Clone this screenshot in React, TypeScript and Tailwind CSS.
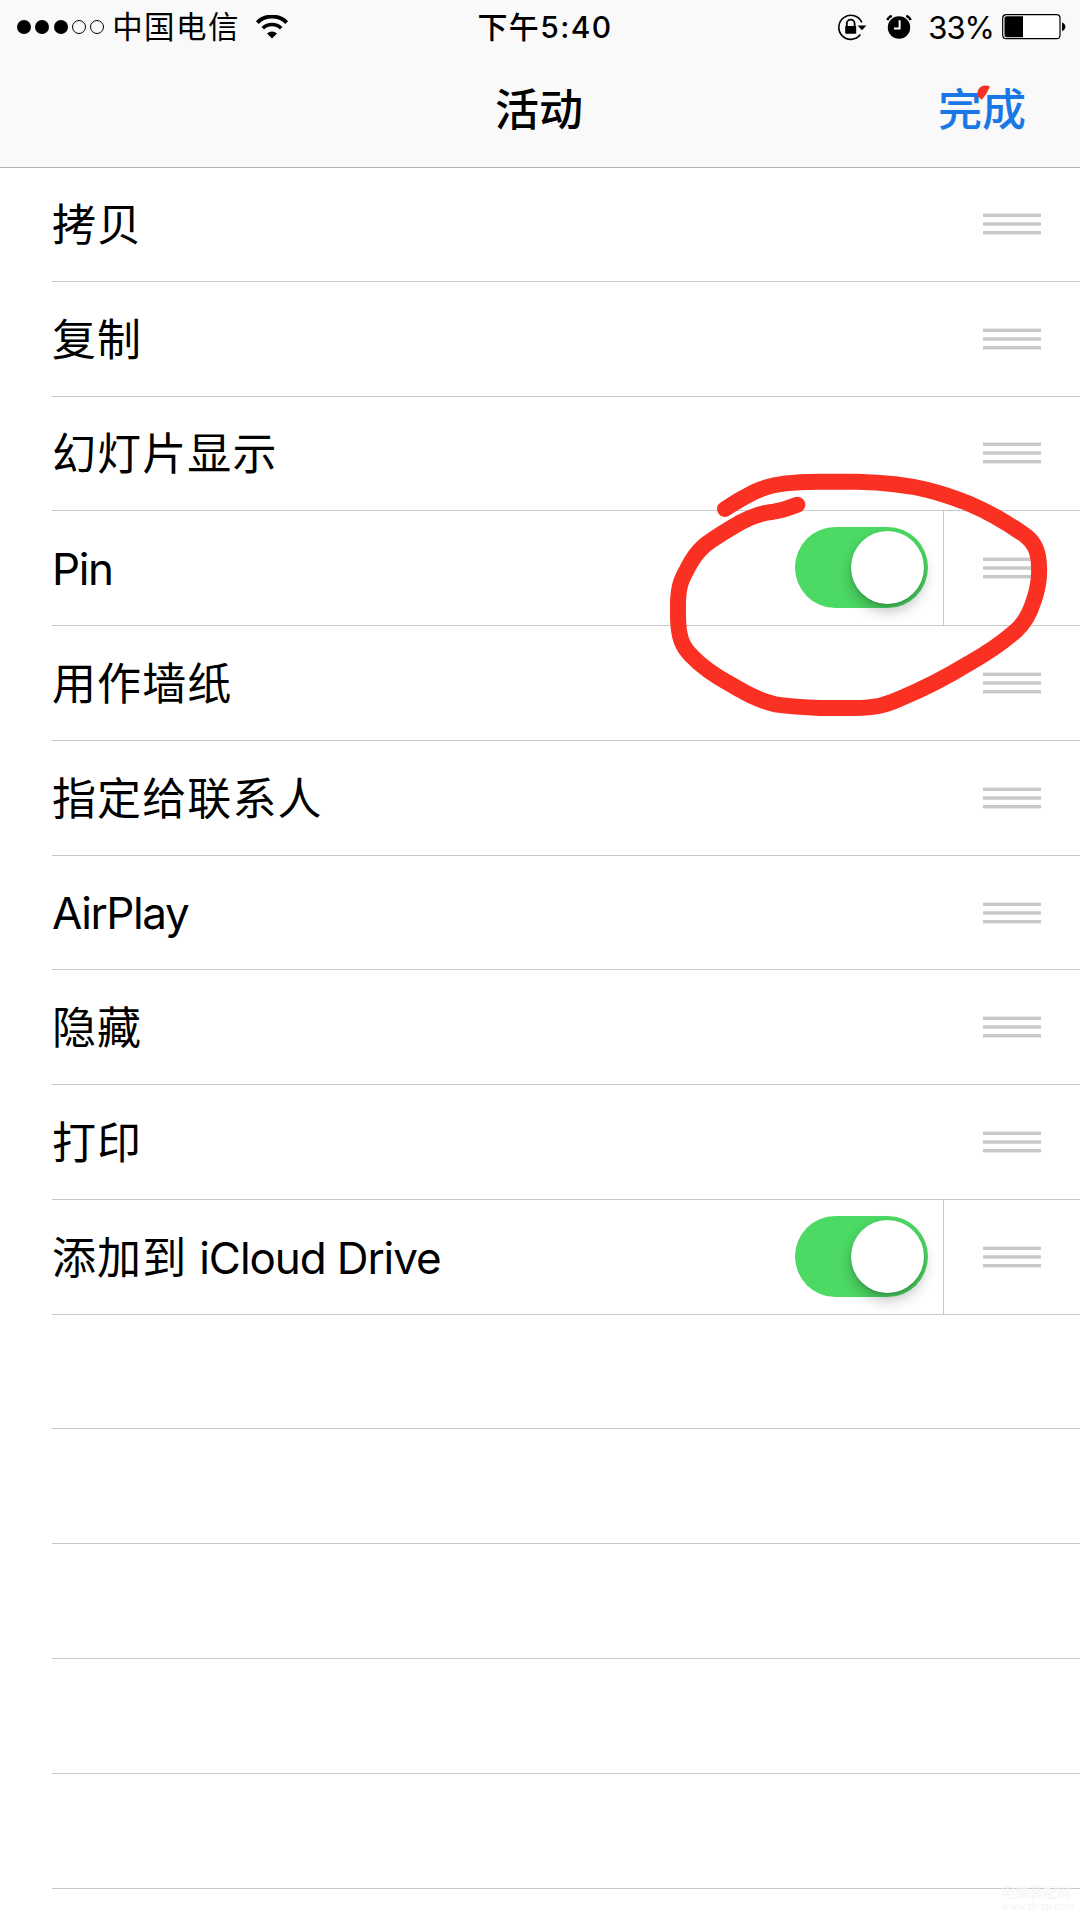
import React, { useState } from 'react';

interface Activity {
  id: string;
  title?: string;
  latin?: string;
  enabled?: boolean;
}

const ACTIVITIES: Activity[] = [
  { id: 'copy', title: '拷贝' },
  { id: 'duplicate', title: '复制' },
  { id: 'slideshow', title: '幻灯片显示' },
  { id: 'pin', latin: 'Pin', enabled: true },
  { id: 'wallpaper', title: '用作墙纸' },
  { id: 'contact', title: '指定给联系人' },
  { id: 'airplay', latin: 'AirPlay' },
  { id: 'hide', title: '隐藏' },
  { id: 'print', title: '打印' },
  { id: 'icloud', title: '添加到', latin: 'iCloud Drive', enabled: true },
];

const EMPTY_ROWS = [1, 2, 3, 4, 5];

function WifiIcon() {
  return (
    <svg viewBox="0 0 32 24" className="w-8 h-6" fill="none" stroke="black">
      <path d="M1.3 7.6a21 21 0 0 1 29.4 0" strokeWidth="4" />
      <path d="M6.8 13.2a13.4 13.4 0 0 1 18.4 0" strokeWidth="3.6" />
      <path d="M16 23.6l-5-5.1a7.2 7.2 0 0 1 10 0z" fill="black" stroke="none" />
    </svg>
  );
}

function RotationLockIcon() {
  return (
    <svg viewBox="0 0 30 28" className="w-[30px] h-7" fill="none" stroke="black">
      <path d="M24.8 9.5A12 12 0 1 0 23.4 21.6" strokeWidth="1.6" />
      <path d="M20.6 12.4h8.8L25 17.2z" fill="black" stroke="none" />
      <path d="M9.8 14v-3.4a3.9 3.9 0 0 1 7.8 0V14" strokeWidth="1.8" />
      <rect x="8.2" y="13" width="11" height="7.8" rx="0.8" fill="black" stroke="none" />
    </svg>
  );
}

function AlarmIcon() {
  return (
    <svg viewBox="0 0 26 26" className="w-[26px] h-[26px]" fill="none">
      <circle cx="13" cy="13.5" r="11.2" fill="black" />
      <path
        d="M1.4 6.2Q2.5 3 5.8 1.9M24.6 6.2Q23.5 3 20.2 1.9"
        stroke="black"
        strokeWidth="2.4"
      />
      <path d="M13.6 6.2v8.2H8" stroke="white" strokeWidth="2" />
    </svg>
  );
}

function BatteryIcon() {
  return (
    <svg viewBox="0 0 64 26" className="w-16 h-[26px]">
      <rect x="0.7" y="0.7" width="57.3" height="24" rx="3.5" fill="white" stroke="black" strokeWidth="1.2" />
      <path d="M4.5 2.2H21V23.2H4.500a2 2 0 0 1-2-2V4.2a2 2 0 0 1 2-2z" fill="black" />
      <path d="M60 8.5q3.4 1.5 3.4 4.3t-3.4 4.3z" fill="black" />
    </svg>
  );
}

function StatusBar() {
  return (
    <div className="grid grid-cols-[440px_1fr_430px] h-[54px] items-center">
      <div className="flex items-center pl-[17px]">
        <div className="flex space-x-[4.3px]">
          <span className="w-3.5 h-3.5 rounded-full bg-black" />
          <span className="w-3.5 h-3.5 rounded-full bg-black" />
          <span className="w-3.5 h-3.5 rounded-full bg-black" />
          <span className="w-3.5 h-3.5 rounded-full border border-black" />
          <span className="w-3.5 h-3.5 rounded-full border border-black" />
        </div>
        <span className="ml-[8px] mr-4 text-[30.5px] leading-none tracking-[1.4px]">
          中国电信
        </span>
        <WifiIcon />
      </div>
      <div className="flex justify-center items-center text-[30px] leading-none font-medium tracking-[1.4px]">
        <span>下午</span>
        <span>5:40</span>
      </div>
      <div className="flex items-center justify-end pr-[14px]">
        <RotationLockIcon />
        <span className="ml-[19px] mr-4">
          <AlarmIcon />
        </span>
        <span className="mr-[8px] text-[31px] leading-none tracking-[-1px]">
          33%
        </span>
        <BatteryIcon />
      </div>
    </div>
  );
}

function NavBar() {
  return (
    <div className="grid grid-cols-3 flex-1 items-center text-[44px] leading-none">
      <span />
      <h1 className="text-center font-medium -ml-[2px] -mt-[2px]">活动</h1>
      <button className="relative justify-self-end mr-[54px] -mt-[2px] text-[#1a78e6] font-medium">
        完成
        {/* stray pen mark over the button */}
        <svg viewBox="0 0 14 16" className="absolute left-[39px] -top-[3px] w-3.5 h-4">
          <path d="M0.5 12C-0.5 5 3 0.5 8 0.5q3 0 5 1Q10 9 4.5 15 3 12 0.5 12z" fill="#f23024" />
        </svg>
      </button>
    </div>
  );
}

interface ToggleProps {
  checked: boolean;
  onChange: () => void;
}

function Toggle({ checked, onChange }: ToggleProps) {
  return (
    <button
      role="switch"
      aria-checked={checked}
      onClick={onChange}
      className={`flex items-center w-[133px] h-[81px] rounded-full px-[4.5px] mr-[15px] mb-px ${
        checked ? 'bg-[#4cd964] justify-end' : 'bg-[#e5e5e5] justify-start'
      }`}
    >
      <span className="w-[73px] h-[73px] rounded-full bg-white shadow-[0_7px_14px_rgba(0,0,0,0.25),0_2px_3px_rgba(0,0,0,0.12)]" />
    </button>
  );
}

function DragHandle() {
  return (
    <svg viewBox="0 0 58 22" className="w-[58px] h-[22px]" fill="#c7c7cc">
      <rect y="0.6" width="58" height="3.4" />
      <rect y="9.3" width="58" height="3.4" />
      <rect y="18" width="58" height="3.4" />
    </svg>
  );
}

function ActivityRow({ data }: { data: Activity }) {
  const { title, latin, enabled } = data;
  const [isOn, setIsOn] = useState<boolean>(enabled ?? false);

  return (
    <li className="flex h-[114.78px] first:h-[113.8px] ml-[52px] border-b border-[#c8c7cc]">
      <div className="flex flex-1 items-center pt-[2px] text-[44px] leading-none">
        {title && <span className="tracking-[1.1px]">{title}</span>}
        {latin && (
          <span
            className={
              title ? 'ml-3 tracking-[-1.1px]' : '-mt-px tracking-[-1.4px]'
            }
          >
            {latin}
          </span>
        )}
      </div>
      {enabled !== undefined && (
        <div className="flex items-center border-r border-[#c8c7cc]">
          <Toggle checked={isOn} onChange={() => setIsOn(!isOn)} />
        </div>
      )}
      <div className="flex items-center pl-[39px] pr-[39px]">
        <DragHandle />
      </div>
    </li>
  );
}

// freehand pen stroke around the Pin switch
function PenCircle() {
  return (
    <svg
      viewBox="0 0 1320 870"
      className="absolute left-[640px] top-[450px] w-[440px] h-[290px] pointer-events-none"
      fill="none"
      stroke="#fa3022"
      strokeWidth="48"
      strokeLinecap="round"
      strokeLinejoin="round"
    >
      <path d="M255 177C280 160 310 142 345 125C400 98 470 96 540 95H650C730 97 790 102 860 119C900 129 940 142 985 160C1040 183 1100 217 1158 258C1188 283 1196 310 1197 350C1199 385 1194 415 1182 450C1170 490 1155 518 1128 542C1085 580 1035 613 985 641C930 675 850 717 780 746C735 766 710 773 640 774H540C490 772 450 769 405 763C350 750 310 725 270 702C230 680 190 655 155 618C125 588 115 560 114 500V455C116 410 122 393 140 360C155 330 170 307 190 290C215 268 250 248 300 218C340 197 365 188 400 185C425 182 445 174 472 164" />
    </svg>
  );
}

function Watermark() {
  return (
    <div className="absolute right-[9px] bottom-[7px] w-[70px] text-center text-[#f4f4f4] pointer-events-none">
      <p className="text-[14px] leading-[16px]">电脑装配网</p>
      <p className="text-[10px] leading-[13px]">www.dnzp.com</p>
    </div>
  );
}

function App() {
  return (
    <main className="relative w-[1080px] h-[1920px] overflow-hidden bg-white text-black font-['Inter','Noto_Sans_CJK_SC',sans-serif]">
      <header className="flex flex-col h-[168px] bg-[#f9f9f9] border-b border-[#b2b2b2]">
        <StatusBar />
        <NavBar />
      </header>
      <ul>
        {ACTIVITIES.map((item) => (
          <ActivityRow key={item.id} data={item} />
        ))}
        {EMPTY_ROWS.map((row) => (
          <li
            key={row}
            className="h-[114.78px] ml-[52px] border-b border-[#c8c7cc]"
          />
        ))}
      </ul>
      <PenCircle />
      <Watermark />
    </main>
  );
}

export default App;
